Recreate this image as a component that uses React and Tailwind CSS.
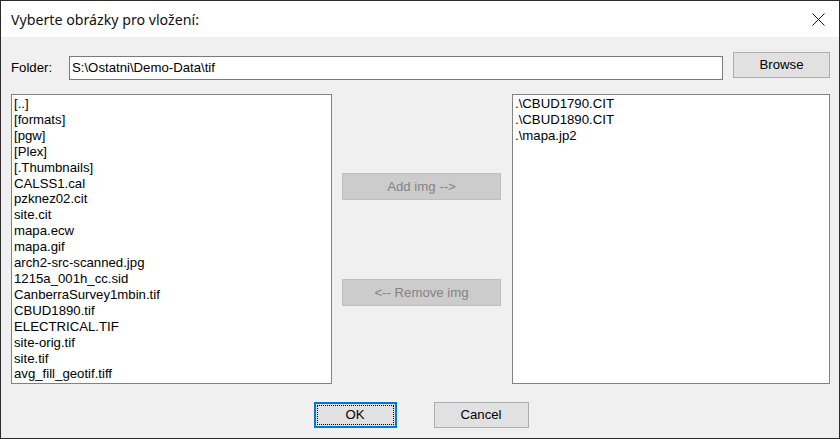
import React from "react";

const leftItems = [
  "[..]",
  "[formats]",
  "[pgw]",
  "[Plex]",
  "[.Thumbnails]",
  "CALSS1.cal",
  "pzknez02.cit",
  "site.cit",
  "mapa.ecw",
  "mapa.gif",
  "arch2-src-scanned.jpg",
  "1215a_001h_cc.sid",
  "CanberraSurvey1mbin.tif",
  "CBUD1890.tif",
  "ELECTRICAL.TIF",
  "site-orig.tif",
  "site.tif",
  "avg_fill_geotif.tiff",
];

const rightItems = [".\\CBUD1790.CIT", ".\\CBUD1890.CIT", ".\\mapa.jp2"];

export default function App() {
  const sans = { fontFamily: '"Liberation Sans", Arial, sans-serif' };
  return (
    <div
      className="w-[840px] h-[439px] border border-[#2b2b2b] bg-[#f0f0f0] flex flex-col text-black overflow-hidden"
      style={sans}
    >
      {/* Title bar */}
      <div className="h-[36px] bg-white flex items-center justify-between pl-[10px] pr-[14px] shrink-0">
        <span
          className="text-[14.2px] text-[#111] mt-[1px]"
          style={{ fontFamily: '"Noto Sans", "Open Sans", sans-serif' }}
        >
          Vyberte obrázky pro vložení:
        </span>
        <svg width="13" height="13" viewBox="0 0 13 13" className="mt-[1px]">
          <path d="M0.5 0.5 L12.5 12.5 M12.5 0.5 L0.5 12.5" stroke="#111" strokeWidth="1" fill="none" />
        </svg>
      </div>

      {/* Body */}
      <div className="flex flex-col flex-1 pl-[10px] pr-[9px]">
        {/* Folder row */}
        <div className="flex items-start h-[57px]">
          <span className="text-[13.2px] leading-[16px] mt-[23px] w-[58px] shrink-0">Folder:</span>
          <div className="mt-[19px] w-[654px] h-[24px] bg-white border border-[#7a7a7a] flex items-center pl-[2px] text-[13.2px] leading-[16px]">
            S:\Ostatni\Demo-Data\tif
          </div>
          <div className="ml-[10px] mt-[15px] w-[97px] h-[26px] bg-[#e1e1e1] border border-[#adadad] flex items-center justify-center text-[13.2px]">
            Browse
          </div>
        </div>

        {/* Lists row */}
        <div className="flex items-start">
          <div className="w-[321px] h-[290px] bg-white border border-[#828282] pl-[2px] pt-[1px] text-[13.2px] leading-[15.9px] overflow-hidden shrink-0">
            {leftItems.map((t) => (
              <div key={t} className="whitespace-nowrap">{t}</div>
            ))}
          </div>
          <div className="w-[180px] shrink-0 flex flex-col items-start pt-[79px] pl-[10px]">
            <div className="w-[159px] h-[27px] bg-[#cccccc] border border-[#bfbfbf] flex items-center justify-center text-[13.2px] text-[#838383]">
              Add img --&gt;
            </div>
            <div className="mt-[79px] w-[159px] h-[27px] bg-[#cccccc] border border-[#bfbfbf] flex items-center justify-center text-[13.2px] text-[#838383]">
              &lt;-- Remove img
            </div>
          </div>
          <div className="w-[318px] h-[290px] bg-white border border-[#828282] pl-[2px] pt-[1px] text-[13.2px] leading-[15.9px] overflow-hidden shrink-0">
            {rightItems.map((t) => (
              <div key={t} className="whitespace-nowrap">{t}</div>
            ))}
          </div>
        </div>

        {/* Bottom buttons */}
        <div className="flex justify-center gap-[37px] mt-[18px] pl-[1px]">
          <div className="w-[83px] h-[26px] bg-[#e1e1e1] border-2 border-[#0078d7] p-[1px]">
            <div className="w-full h-full border border-dotted border-black flex items-center justify-center text-[13.2px]">
              OK
            </div>
          </div>
          <div className="w-[95px] h-[26px] bg-[#e1e1e1] border border-[#adadad] flex items-center justify-center text-[13.2px]">
            Cancel
          </div>
        </div>
      </div>
    </div>
  );
}
